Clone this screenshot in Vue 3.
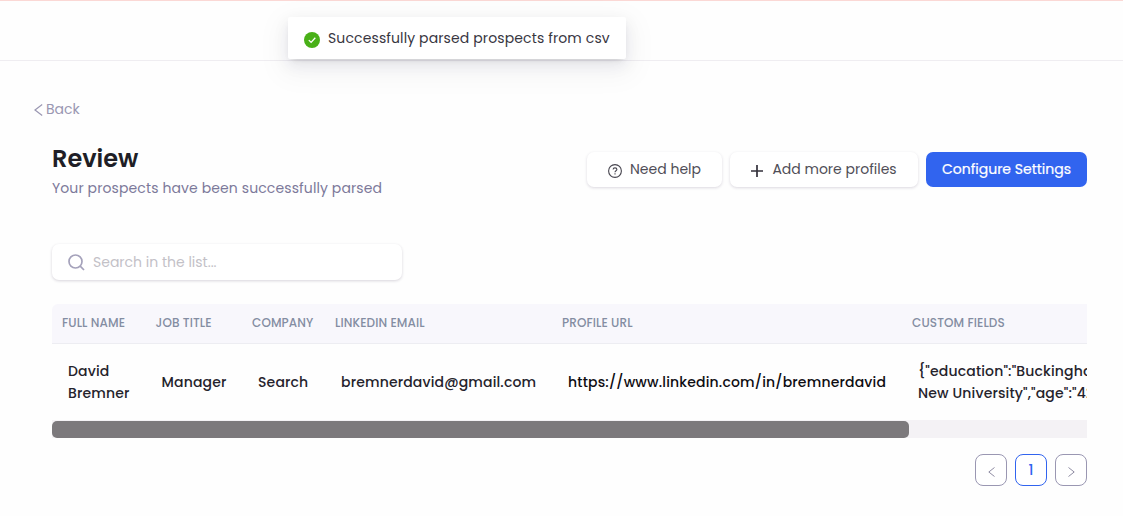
<script setup>
import { ref } from 'vue'

const search = ref('')

const columns = [
  { title: 'FULL NAME', key: 'name', width: 93.5 },
  { title: 'JOB TITLE', key: 'job', width: 96.5 },
  { title: 'COMPANY', key: 'company', width: 83 },
  { title: 'LINKEDIN EMAIL', key: 'email', width: 227 },
  { title: 'PROFILE URL', key: 'url', width: 350 },
  { title: 'CUSTOM FIELDS', key: 'custom', width: 400 }
]

const prospects = [
  {
    name: 'David\nBremner',
    job: 'Manager',
    company: 'Search',
    email: 'bremnerdavid@gmail.com',
    url: 'https://www.linkedin.com/in/bremnerdavid',
    custom: '{"education":"Buckinghamshire\nNew University","age":"42"}'
  }
]
</script>

<template>
  <div class="page">
    <header class="topbar"></header>

    <div class="message">
      <svg class="message-icon" viewBox="0 0 16 16" width="16" height="16">
        <circle cx="8" cy="8" r="8" fill="#49b018" />
        <path d="M4.8 8.1l2.3 2.3 4.2-4.6" fill="none" stroke="#fff" stroke-width="1.3" />
      </svg>
      <span class="message-text">Successfully parsed prospects from csv</span>
    </div>

    <main class="content">
      <a class="back">
        <svg viewBox="0 0 9 12" width="9" height="12">
          <path d="M8.2 .6L1 6l7.200 5.400" fill="none" stroke="#9a97b2" stroke-width="1.2" />
        </svg>
        <span>Back</span>
      </a>

      <div class="heading">
        <div>
          <h1>Review</h1>
          <p class="subtitle">Your prospects have been successfully parsed</p>
        </div>
        <div class="actions">
          <button class="btn btn-help">
            <svg viewBox="0 0 14 14" width="14" height="14" fill="none" stroke="#47454f" stroke-width="1.1">
              <circle cx="7" cy="7" r="6.400" />
              <path d="M5.100 5.600c0-1 .8-1.700 1.900-1.700s1.900.7 1.900 1.600c0 1.200-1.900 1.300-1.900 2.700" />
              <path d="M7 9.300v1.200" />
            </svg>
            <span>Need help</span>
          </button>
          <button class="btn btn-add">
            <svg viewBox="0 0 12 12" width="12" height="12">
              <path d="M6 0v12M0 6h12" stroke="#33313b" stroke-width="1.700" />
            </svg>
            <span>Add more profiles</span>
          </button>
          <button class="btn btn-primary"><span>Configure Settings</span></button>
        </div>
      </div>

      <label class="search">
        <svg viewBox="0 0 17 17" width="17" height="17" fill="none" stroke="#a5a2bb" stroke-width="1.700">
          <circle cx="7.500" cy="7.500" r="6.500" />
          <path d="M12.200 12.200L16 16" />
        </svg>
        <input v-model="search" type="text" placeholder="Search in the list..." />
      </label>

      <div class="table-wrap">
        <table>
          <colgroup>
            <col v-for="col in columns" :key="col.key" :style="{ width: col.width + 'px' }" />
          </colgroup>
          <thead>
            <tr>
              <th v-for="col in columns" :key="col.key">{{ col.title }}</th>
            </tr>
          </thead>
          <tbody>
            <tr v-for="row in prospects" :key="row.email">
              <td v-for="col in columns" :key="col.key" :class="'col-' + col.key">{{ row[col.key] }}</td>
            </tr>
          </tbody>
        </table>
      </div>
      <div class="scrollbar"><div class="thumb"></div></div>

      <nav class="pagination">
        <button class="page-btn">
          <svg viewBox="0 0 7 10" width="7" height="10">
            <path d="M6.500 .5L.8 5l5.700 4.500" fill="none" stroke="#8f8ca3" />
          </svg>
        </button>
        <button class="page-btn active">1</button>
        <button class="page-btn">
          <svg viewBox="0 0 7 10" width="7" height="10">
            <path d="M.5 .5L6.200 5 .5 9.500" fill="none" stroke="#8f8ca3" />
          </svg>
        </button>
      </nav>
    </main>
  </div>
</template>

<style>
body {
  margin: 0;
  background: #fefefe;
}
</style>

<style scoped>
.page {
  position: relative;
  height: 516px;
  overflow: hidden;
  box-sizing: border-box;
  font-family: Poppins, Inter, 'Open Sans', sans-serif;
  font-size: 14px;
  color: #25232c;
}

.topbar {
  height: 61px;
  box-sizing: border-box;
  border-top: 1px solid #fbd8d5;
  border-bottom: 1px solid #efedf1;
}

.message {
  position: absolute;
  top: 17px;
  left: 288px;
  width: 338px;
  height: 42px;
  box-sizing: border-box;
  padding: 0 16px;
  display: flex;
  align-items: center;
  gap: 8px;
  background: #fff;
  border-radius: 2px;
  box-shadow: 0 3px 6px -4px rgba(0, 0, 0, 0.25), 0 6px 16px rgba(30, 20, 60, 0.08),
    0 9px 28px 8px rgba(30, 20, 60, 0.04);
  color: #38363f;
  white-space: nowrap;
}

.message-icon {
  flex: none;
  margin-top: 4px;
}

.message-text {
  letter-spacing: 0.12px;
}

.content {
  padding: 38px 36px 0 52px;
}

.back {
  display: flex;
  align-items: center;
  gap: 3px;
  height: 20px;
  margin-left: -18px;
  color: #9a97b2;
}

.back svg {
  margin-top: 2px;
}

.heading {
  display: flex;
  justify-content: space-between;
  margin-top: 26px;
}

h1 {
  margin: 0;
  height: 28px;
  line-height: 28px;
  font-size: 24px;
  font-weight: 600;
  color: #201e26;
}

.subtitle {
  margin: 5px 0 0;
  line-height: 20px;
  letter-spacing: 0.11px;
  color: #7c799a;
  white-space: nowrap;
}

.actions {
  display: flex;
  gap: 8px;
  margin-top: 7px;
}

.btn {
  display: flex;
  align-items: center;
  justify-content: center;
  height: 35px;
  padding: 0;
  border: 0;
  border-radius: 7px;
  background: #fff;
  box-shadow: 0 1px 3px rgba(40, 20, 60, 0.16);
  font: inherit;
  color: #504e57;
  white-space: nowrap;
}

.btn svg {
  margin-top: 3px;
}

.btn-help {
  width: 135px;
  gap: 8px;
}

.btn-add {
  width: 188px;
  gap: 9px;
}

.btn-primary {
  width: 161px;
  background: #3164ef;
  box-shadow: none;
  color: #fff;
}

.btn-primary span {
  -webkit-text-stroke: 0.2px #fff;
}

.search {
  display: flex;
  align-items: center;
  gap: 8px;
  width: 350px;
  height: 36px;
  box-sizing: border-box;
  margin-top: 46px;
  padding: 0 16px;
  border-radius: 7px;
  background: #fff;
  box-shadow: 0 1px 3px rgba(40, 20, 60, 0.18);
}

.search input {
  flex: 1;
  padding: 0;
  border: 0;
  outline: 0;
  background: none;
  font: inherit;
}

.search input::placeholder {
  color: #c3c1c7;
}

.table-wrap {
  height: 116px;
  margin-top: 24px;
  overflow: hidden;
  border-radius: 6px 0 0 0;
}

table {
  width: 1250px;
  table-layout: fixed;
  border-collapse: separate;
  border-spacing: 0;
}

th {
  height: 40px;
  box-sizing: border-box;
  padding: 0 0 2px 10px;
  border-bottom: 1px solid #ededf2;
  background: #f8f7fc;
  font-size: 12px;
  font-weight: 500;
  letter-spacing: 0.11px;
  text-align: left;
  color: #848da2;
  white-space: nowrap;
}

td {
  height: 76px;
  box-sizing: border-box;
  padding: 0 0 0 16px;
  font-weight: 500;
  line-height: 22px;
  letter-spacing: 0.15px;
  white-space: pre;
}

.col-url {
  letter-spacing: 0.17px;
  color: #0e0d12;
}

.scrollbar {
  height: 18px;
  box-sizing: border-box;
  padding-top: 1px;
  background: #f4f2f5;
}

.thumb {
  width: 857px;
  height: 17px;
  border-radius: 5px;
  background: #7c797c;
}

.pagination {
  display: flex;
  justify-content: flex-end;
  gap: 8px;
  margin-top: 16px;
}

.page-btn {
  display: flex;
  align-items: center;
  justify-content: center;
  width: 32px;
  height: 32px;
  padding: 0;
  border: 1px solid #9a97b2;
  border-radius: 8px;
  background: #fff;
  font: inherit;
}

.page-btn svg {
  margin-top: 3px;
}

.page-btn.active {
  border-color: #3164ef;
  color: #3164ef;
  font-weight: 500;
}
</style>
